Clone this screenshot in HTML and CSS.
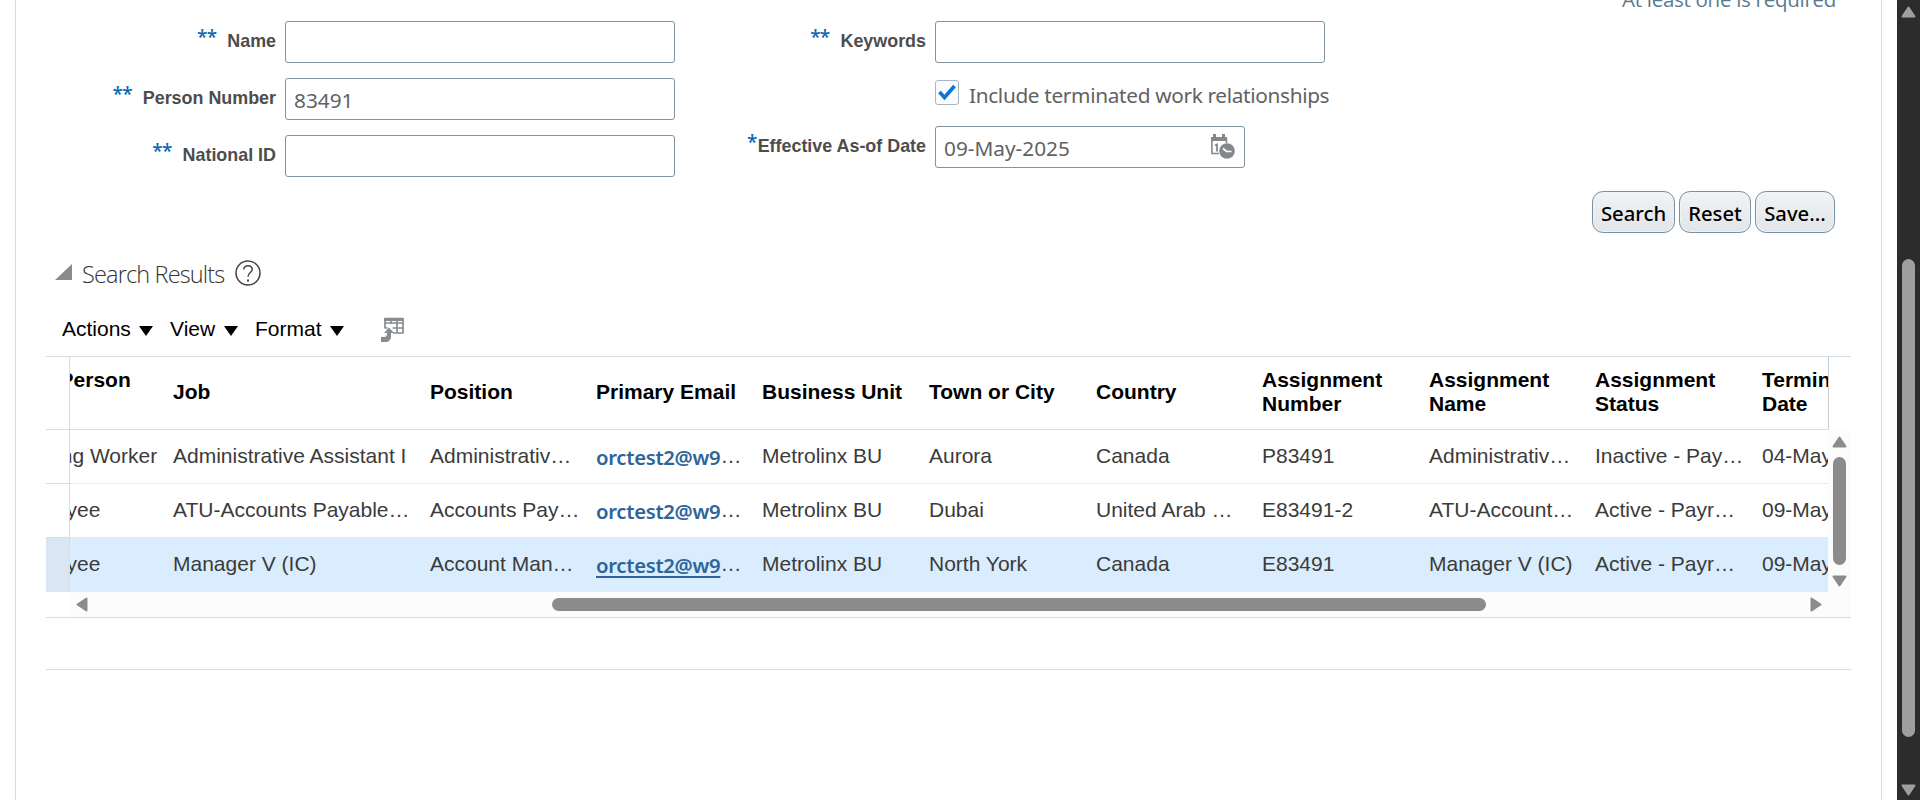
FILE: index.html
```html
<!DOCTYPE html>
<html lang="en">
<head>
<meta charset="utf-8">
<title>Person Search</title>
<link rel="stylesheet" href="styles.css">
</head>
<body>
<div class="page">
  <main class="panel">
    <section class="query">
      <p class="hint">At least one is required</p>
      <div class="form">
        <div class="fields fields-left">
          <label class="label"><span class="req">**</span>Name</label><div class="input"></div>
          <label class="label"><span class="req">**</span>Person Number</label><div class="input"><span class="value">83491</span></div>
          <label class="label"><span class="req">**</span>National ID</label><div class="input"></div>
        </div>
        <div class="fields fields-right">
          <label class="label"><span class="req">**</span>Keywords</label><div class="input"></div>
          <span></span>
          <div class="check"><span class="box"><svg width="22" height="22" viewBox="0 0 22 22"><path d="M3.500 11 8.500 16.500 18.500 5" fill="none" stroke="#0b74d4" stroke-width="3.600"/></svg></span><span class="check-text">Include terminated work relationships</span></div>
          <label class="label"><span class="req tight">*</span>Effective As-of Date</label>
          <div class="input date"><span class="value">09-May-2025</span>
            <svg class="cal" width="26" height="26" viewBox="0 0 26 26"><path d="M2 4h16v4H2z" fill="#82888c"/><path d="M5.500 1v4M14.500 1v4" stroke="#82888c" stroke-width="3"/><path d="M2.900 6v14.500h7M17.500 5v5" fill="none" stroke="#82888c" stroke-width="1.600"/><path d="M6 12.500l2-1v7" fill="none" stroke="#82888c" stroke-width="1.800"/><circle cx="18" cy="18" r="7.800" fill="#82888c"/><path d="M14 15.500l3.500 3h5" fill="none" stroke="#fff" stroke-width="1.700"/></svg>
          </div>
        </div>
      </div>
      <div class="buttons">
        <button class="btn b-search">Search</button><button class="btn b-reset">Reset</button><button class="btn b-save">Save...</button>
      </div>
    </section>

    <section class="results">
      <h2 class="title"><svg class="disclose" width="17" height="17" viewBox="0 0 17 17"><path d="M17 0v16H0z" fill="#878c90"/></svg><span class="title-text">Search Results</span>
        <svg class="help" width="26" height="26" viewBox="0 0 26 26" fill="none" stroke="#444" stroke-width="1.500"><circle cx="13" cy="13" r="12"/><path d="M8.800 9.500c0-5 8.400-4.800 8.400 0 0 3-4.200 3.200-4.200 7.200"/><path d="M13 19.500v2" stroke-width="2"/></svg>
      </h2>
      <div class="toolbar">
        <span class="menu m1">Actions<i class="caret"></i></span><span class="menu m2">View<i class="caret"></i></span><span class="menu m3">Format<i class="caret"></i></span>
        <svg class="detach" width="24" height="25" viewBox="0 0 24 25"><path d="M4 1.500h18M4 6h18M4 11h2.500M11.500 11H22M12 16h10.700M4 1v10.500M10 1v6M16 1v15M22 1v15" fill="none" stroke="#878c90" stroke-width="1.700"/><path d="M3 1h19v3H3z" fill="#878c90"/><path d="M0 20h3c2 0 3-1 3-3v-1H3l5-5.500 5 5.500h-3v3c0 4-2 6-6 6H0z" fill="#878c90"/></svg>
      </div>
      <div class="grid">
        <div class="frozen"><div class="f-head"></div><div class="f-row"></div><div class="f-row"></div><div class="f-row sel"></div></div>
        <div class="view">
          <div class="row head"><span class="cell two">User Person<br>Type</span><span class="cell">Job</span><span class="cell">Position</span><span class="cell">Primary Email</span><span class="cell">Business Unit</span><span class="cell">Town or City</span><span class="cell">Country</span><span class="cell two">Assignment<br>Number</span><span class="cell two">Assignment<br>Name</span><span class="cell two">Assignment<br>Status</span><span class="cell two">Termination<br>Date</span></div>
          <div class="row"><span class="cell">Pending Worker</span><span class="cell">Administrative Assistant I</span><span class="cell">Administrativ…</span><span class="cell"><a class="mail">orctest2@w9</a>…</span><span class="cell">Metrolinx BU</span><span class="cell">Aurora</span><span class="cell">Canada</span><span class="cell">P83491</span><span class="cell">Administrativ…</span><span class="cell">Inactive - Pay…</span><span class="cell">04-May-2025</span></div>
          <div class="row"><span class="cell">Employee</span><span class="cell">ATU-Accounts Payable…</span><span class="cell">Accounts Pay…</span><span class="cell"><a class="mail">orctest2@w9</a>…</span><span class="cell">Metrolinx BU</span><span class="cell">Dubai</span><span class="cell">United Arab …</span><span class="cell">E83491-2</span><span class="cell">ATU-Account…</span><span class="cell">Active - Payr…</span><span class="cell">09-May-2025</span></div>
          <div class="row sel"><span class="cell">Employee</span><span class="cell">Manager V (IC)</span><span class="cell">Account Man…</span><span class="cell"><a class="mail under">orctest2@w9</a>…</span><span class="cell">Metrolinx BU</span><span class="cell">North York</span><span class="cell">Canada</span><span class="cell">E83491</span><span class="cell">Manager V (IC)</span><span class="cell">Active - Payr…</span><span class="cell">09-May-2025</span></div>
        </div>
        <div class="side">
          <div class="side-head"></div>
          <div class="vscroll">
            <svg width="15" height="12" viewBox="0 0 15 12"><path class="arrow" d="M7.500 1.500 13.500 10.500h-12z"/></svg>
            <div class="vthumb"></div>
            <svg width="15" height="12" viewBox="0 0 15 12"><path class="arrow" d="M7.500 10.500 13.500 1.500h-12z"/></svg>
          </div>
        </div>
        <div class="hscroll">
          <svg width="12" height="15" viewBox="0 0 12 15"><path class="arrow" d="M1.500 7.500 10.500 1.500v12z"/></svg>
          <div class="hthumb"></div>
          <svg width="12" height="15" viewBox="0 0 12 15"><path class="arrow" d="M10.500 7.500 1.500 1.500v12z"/></svg>
        </div>
      </div>
      <div class="footer"></div>
    </section>
  </main>
  <aside class="page-scroll">
    <svg width="15" height="12" viewBox="0 0 15 12"><path class="arrow light" d="M7.500 1.500 13.500 10.500h-12z"/></svg>
    <div class="page-thumb"></div>
    <svg width="15" height="12" viewBox="0 0 15 12"><path class="arrow light" d="M7.500 10.500 13.500 1.500h-12z"/></svg>
  </aside>
</div>
</body>
</html>
```
FILE: styles.css
```css
* { box-sizing: border-box; }
body { margin: 0; background: #fff; font-family: "Liberation Sans", Arial, sans-serif; overflow: hidden; }
svg { display: block; flex: none; }
.page { display: flex; width: 1920px; height: 800px; padding-left: 15px; overflow: hidden; }
.panel { width: 1867px; border: solid #d3dde5; border-width: 0 1px; flex: none; overflow: hidden; padding-left: 30px; }
.query { display: flow-root; height: 234px; padding-right: 45px; }
.hint { margin: -14px 0 0; height: 35px; text-align: right; font: 20.500px/26px "Open Sans", sans-serif; letter-spacing: -.28px; color: #587b90; }
.form { display: flex; height: 170px; }
.fields { display: grid; justify-content: end; }
.fields-left { width: 629px; grid-template-columns: 230px 390px; column-gap: 9px; grid-template-rows: 42px 42px 42px; row-gap: 15px; }
.fields-right { width: 650px; grid-template-columns: 240px 390px; column-gap: 9px; grid-template-rows: 42px 63px 42px; }
.label { display: flex; justify-content: flex-end; font-weight: bold; font-size: 17.900px; line-height: 41px; color: #4d4d4d; white-space: nowrap; }
.req { color: #0b68b0; font: 600 19px/33px "Open Sans", sans-serif; letter-spacing: -.8px; margin-right: 11px; }
.req.tight { margin-right: 1px; }
.input { display: flex; align-items: center; border: 1px solid #7f949f; border-radius: 3px; height: 42px; padding: 1px 9px 0 8px; background: #fff; }
.date { width: 310px; justify-content: space-between; }
.value, .check-text { font: 20.800px/28px "Noto Sans", sans-serif; color: #626262; white-space: nowrap; }
.cal { margin: -3px 0 0; }
.check { display: flex; padding-top: 17px; }
.box { width: 24px; height: 25px; border: 1px solid #a9b6c0; border-radius: 3px; background: #f9fbfc; }
.check-text { margin: 1px 0 0 10px; letter-spacing: -.34px; }
.buttons { display: flex; justify-content: flex-end; gap: 4px; padding-right: 1px; }
.btn { height: 42px; padding: 1px 0 0; border: 1px solid #7790a3; border-radius: 11px; background: linear-gradient(#f1f3f4, #e1e5e9); box-shadow: inset 0 0 0 1px #f0f3f5; font: 500 20.300px/28px "Noto Sans", sans-serif; color: #000; }
.b-search { width: 83px; } .b-reset { width: 72px; } .b-save { width: 80px; }
.title { display: flex; margin: 0; height: 66px; padding: 25px 0 0 9px; font: 300 23.500px/30px "Open Sans", sans-serif; color: #333; }
.disclose { margin: 5px 10px 0 0; }
.title-text { width: 153px; white-space: nowrap; letter-spacing: -.85px; }
.help { margin-top: 1px; }
.toolbar { display: flex; align-items: flex-start; height: 56px; padding: 17px 0 0 16px; font-size: 21px; line-height: 24px; color: #000; }
.menu { display: flex; align-items: center; justify-content: space-between; margin-right: 17px; }
.m1 { width: 91px; } .m2 { width: 68px; } .m3 { width: 89px; }
.caret { border: solid transparent; border-width: 10px 7px 0; border-top-color: #000; margin-top: 3px; }
.detach { margin: 0 0 0 20px; }
.grid { display: grid; width: 1805px; height: 262px; grid-template-columns: 24px 1758px 23px; grid-template-rows: 235px 25px; border: solid #d3dde5; border-width: 1px 0; }
.frozen { border-right: 1px solid #d3dde5; }
.f-head { height: 73px; border-bottom: 1px solid #d3dde5; }
.f-row { height: 54px; border-bottom: 1px solid #d3dde5; }
.view { overflow: hidden; display: flex; flex-direction: column; align-items: flex-end; width: 1758px; }
.row { display: grid; width: 1932px; flex: none; margin-right: -103px; grid-template-columns: 166px 257px 166px 166px 167px 167px 166px 167px 166px 167px 177px; height: 54px; border-bottom: 1px solid #e8ebee; font-size: 21px; line-height: 24px; color: #3b3b3b; }
.cell { padding: 14px 0 0 8px; white-space: nowrap; overflow: hidden; }
.head { height: 73px; border-bottom-color: #d3dde5; font-weight: bold; color: #000; }
.head .cell { padding-top: 23px; }
.head .two { padding-top: 11px; }
.row:last-child, .f-row:last-child { border-bottom: 0; }
.sel { background: #d9edfe; }
.frozen .sel { background: #dae7f3; }
.mail { font: 600 20.300px/24px "Noto Sans", sans-serif; letter-spacing: -.3px; color: #2e6499; vertical-align: -2px; }
.under { text-decoration: underline; text-decoration-thickness: 2px; text-underline-offset: 3px; }
.side-head { height: 73px; border-left: 1px solid #c9ced2; }
.vscroll { background: #fcfcfc; padding: 6px 0 3px 4px; height: 162px; }
.vthumb { width: 13px; height: 108px; margin: 9px 1px 10px; border-radius: 7px; background: #8b8b8b; }
.arrow { fill: #8b8b8b; stroke: #8b8b8b; stroke-width: 2; stroke-linejoin: round; }
.light { fill: #9f9f9f; stroke: #9f9f9f; }
.hscroll { grid-column: 2 / 4; display: flex; align-items: center; background: #fcfcfc; padding: 0 27px 0 6px; }
.hthumb { width: 934px; height: 13px; border-radius: 7px; background: #8b8b8b; margin: 0 324px 0 464px; }
.footer { width: 1805px; height: 52px; border-bottom: 1px solid #d3dde5; }
.page-scroll { width: 23px; margin-left: 15px; background: #2c2c2c; padding: 6px 0 4px 4px; display: flex; flex-direction: column; flex: none; }
.page-thumb { width: 13px; height: 478px; margin: 241px 1px 47px; border-radius: 7px; background: #9f9f9f; flex: none; }
```
